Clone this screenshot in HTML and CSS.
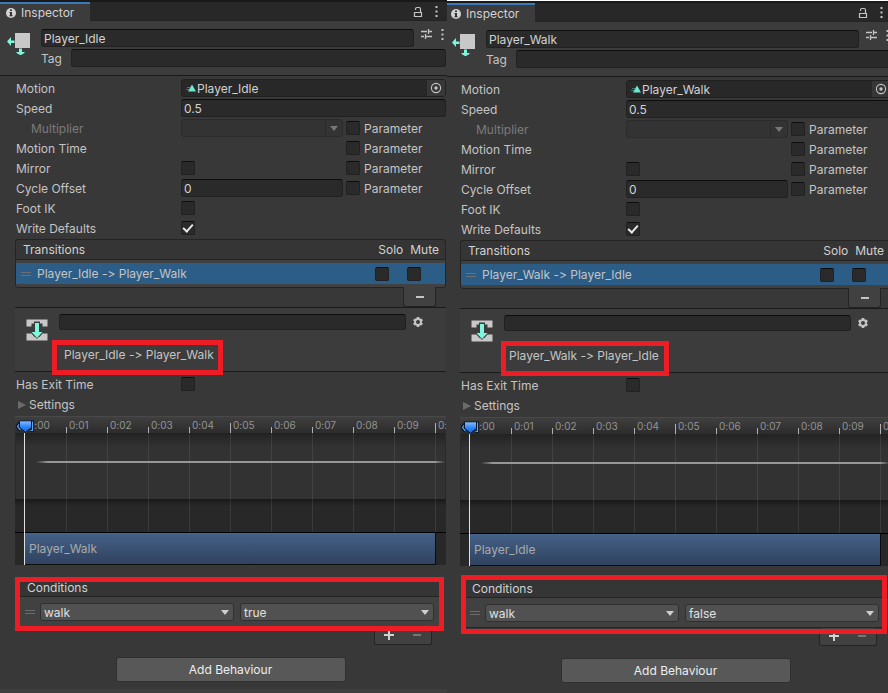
FILE: index.html
```html
<!DOCTYPE html>
<html lang="en">
<head>
<meta charset="utf-8">
<title>Inspector</title>
<link rel="stylesheet" href="styles.css">
</head>
<body>
<svg class="defs" aria-hidden="true">
  <defs>
    <linearGradient id="blue" x1="0" y1="0" x2="0" y2="1"><stop offset="0" stop-color="#8fc0ff"/><stop offset=".5" stop-color="#2f86f5"/><stop offset="1" stop-color="#1465d8"/></linearGradient>
    <symbol id="i-info" viewBox="0 0 10 10"><circle cx="5" cy="5" r="5" fill="#d2d2d2"/><path d="M4 1.5h2v1.6H4zM3.5 4H6v3.2h.7v1H3.4v-1H4V5h-.5z" fill="#333"/></symbol>
    <symbol id="i-lock" viewBox="0 0 10 12"><path d="M1.500 6.500h7v4h-7zM2.500 4V3Q2.500 1.500 4 1.500h2Q7.500 1.500 7.500 3v3.500" fill="none" stroke="#c4c4c4" stroke-width="1.200"/></symbol>
    <symbol id="i-more" viewBox="0 0 3 11"><path d="M.5 0h2v2h-2zM.5 4.500h2v2h-2zM.5 9h2v2h-2z" fill="#c4c4c4"/></symbol>
    <symbol id="i-sliders" viewBox="0 0 11 10"><path d="M0 2.500h6M8 2.500h3M7.500 0v5M0 7.500h3M5 7.500h6M4.500 5v5" fill="none" stroke="#c4c4c4" stroke-width="1.300"/></symbol>
    <symbol id="i-state" viewBox="0 0 24 24"><path d="M8 1h15v15H8z" fill="#c8c8c8"/><path d="M0 9.500 4 5v3.500h3.500v2.500H4V14zM12 16.500h3V20h2.500v1L14 23h-1l-3.500-2v-1H12z" fill="#7ff5dc"/></symbol>
    <symbol id="i-clip" viewBox="0 0 10 8"><path d="M1 3.500h3M0 5.500h3" stroke="#3a7a70"/><path d="M6 .5 10 7.500H2z" fill="#6ee8d0"/></symbol>
    <symbol id="i-pick" viewBox="0 0 12 12"><circle cx="6" cy="6" r="4.600" fill="none" stroke="#c4c4c4" stroke-width="1.100"/><circle cx="6" cy="6" r="1.700" fill="#c4c4c4"/></symbol>
    <symbol id="i-trans" viewBox="0 0 22 22"><path d="M.5.5h21v7h-5v-3h-11v3h-5zM.5 14.500h5l3 3.500h5l3-3.500h5v7H.5z" fill="#c8c8c8"/><path d="M8 2.500h6v9h4L11 20 4 12.500 8 11.500z" fill="#3c3c3c"/><path d="M9 4h4v9h3.500L11 19 5.500 13H9z" fill="#7ff5dc"/></symbol>
    <symbol id="i-gear" viewBox="0 0 12 12"><path d="M6 1v10M1.700 3.500l8.600 5M1.700 8.500l8.600-5" stroke="#c4c4c4" stroke-width="2.600"/><circle cx="6" cy="6" r="4" fill="#c4c4c4"/><circle cx="6" cy="6" r="2" fill="#3c3c3c"/></symbol>
    <symbol id="i-head" viewBox="0 0 18 13"><path d="M4.500 2 1 6.500l3.500 4M14.500 2h2v8.500h-2" fill="none" stroke="#0b1626" stroke-width="3"/><path d="M4.500 2.500 1.500 6.500l3 3.500M14.500 2h2v8.500h-2" fill="none" stroke="#5fa4f5" stroke-width="1.200"/><path d="M3.500.8h12v6.500L9.500 12.400 3.500 7.300z" fill="url(#blue)" stroke="#0b1626"/></symbol>
  </defs>
</svg>

<section class="pane first">
  <div class="tabs">
    <h1 class="tab"><svg width="10" height="10"><use href="#i-info"/></svg>Inspector</h1>
    <button class="icon" aria-label="Lock"><svg width="10" height="12"><use href="#i-lock"/></svg></button>
    <button class="icon" aria-label="Menu"><svg width="3" height="11"><use href="#i-more"/></svg></button>
  </div>
  <header class="head">
    <svg class="state" width="24" height="24"><use href="#i-state"/></svg>
    <div class="names">
      <div class="name"><input class="field" aria-label="Name" value="Player_Idle"><button class="icon" aria-label="Presets"><svg width="11" height="10"><use href="#i-sliders"/></svg></button><button class="icon" aria-label="More"><svg width="3" height="11"><use href="#i-more"/></svg></button></div>
      <div class="tag"><label for="tag1">Tag</label><input class="field" id="tag1"></div>
    </div>
  </header>
  <div class="props">
    <div class="row"><label for="mo1">Motion</label><div class="object wide"><svg width="10" height="8"><use href="#i-clip"/></svg><input id="mo1" value="Player_Idle"><button class="pick" aria-label="Select motion"><svg width="12" height="12"><use href="#i-pick"/></svg></button></div></div>
    <div class="row"><label for="sp1">Speed</label><input class="field wide" id="sp1" value="0.5"></div>
    <div class="row"><label class="sub" for="mu1">Multiplier</label><div class="drop off"><select id="mu1" disabled><option></option></select></div><label class="param"><input type="checkbox">Parameter</label></div>
    <div class="row"><span>Motion Time</span><span></span><label class="param"><input type="checkbox">Parameter</label></div>
    <div class="row"><label for="mi1">Mirror</label><input type="checkbox" id="mi1"><label class="param"><input type="checkbox">Parameter</label></div>
    <div class="row"><label for="cy1">Cycle Offset</label><input class="field" id="cy1" value="0"><label class="param"><input type="checkbox">Parameter</label></div>
    <div class="row"><label for="fo1">Foot IK</label><input type="checkbox" id="fo1"></div>
    <div class="row"><label for="wr1">Write Defaults</label><input type="checkbox" id="wr1" checked></div>
  </div>
  <div class="list">
    <div class="listhead"><span>Transitions</span><span>Solo</span><span>Mute</span></div>
    <div class="listbody"><div class="item"><i class="grip"></i><span>Player_Idle -&gt; Player_Walk</span><input type="checkbox" aria-label="Solo"><input type="checkbox" aria-label="Mute"></div></div>
    <div class="listfoot"><button class="minus" aria-label="Remove transition"></button></div>
  </div>
  <div class="trans">
    <svg class="transicon" width="22" height="22"><use href="#i-trans"/></svg>
    <div class="transmain">
      <div class="transname"><input class="field" aria-label="Transition name"><button class="icon" aria-label="Settings"><svg width="12" height="12"><use href="#i-gear"/></svg></button></div>
      <p class="marked">Player_Idle -&gt; Player_Walk</p>
    </div>
  </div>
  <div class="props exit">
    <div class="row"><label for="ex1">Has Exit Time</label><input type="checkbox" id="ex1"></div>
    <button class="fold">Settings</button>
  </div>
  <div class="timeline">
    <div class="ruler"><span>0:00</span><span>0:01</span><span>0:02</span><span>0:03</span><span>0:04</span><span class="major">0:05</span><span>0:06</span><span>0:07</span><span>0:08</span><span>0:09</span><span class="major">0:10</span></div>
    <div class="track curve"></div>
    <div class="track low"></div>
    <div class="cliprow"><div class="clip">Player_Walk</div></div>
    <div class="playhead"><svg width="18" height="13"><use href="#i-head"/></svg></div>
  </div>
  <div class="conds">
    <h2>Conditions</h2>
    <div class="cond"><i class="grip"></i><div class="drop"><select aria-label="Parameter"><option>walk</option></select></div><div class="drop"><select aria-label="Value"><option>true</option></select></div></div>
    <div class="condfoot"><button class="plus" aria-label="Add condition"></button><button class="minus dim" aria-label="Remove condition"></button></div>
  </div>
  <div class="addrow"><button class="add">Add Behaviour</button></div>
  <div class="end"></div>
</section>

<section class="pane second">
  <div class="tabs">
    <h1 class="tab"><svg width="10" height="10"><use href="#i-info"/></svg>Inspector</h1>
    <button class="icon" aria-label="Lock"><svg width="10" height="12"><use href="#i-lock"/></svg></button>
    <button class="icon" aria-label="Menu"><svg width="3" height="11"><use href="#i-more"/></svg></button>
  </div>
  <header class="head">
    <svg class="state" width="24" height="24"><use href="#i-state"/></svg>
    <div class="names">
      <div class="name"><input class="field" aria-label="Name" value="Player_Walk"><button class="icon" aria-label="Presets"><svg width="11" height="10"><use href="#i-sliders"/></svg></button><button class="icon" aria-label="More"><svg width="3" height="11"><use href="#i-more"/></svg></button></div>
      <div class="tag"><label for="tag2">Tag</label><input class="field" id="tag2"></div>
    </div>
  </header>
  <div class="props">
    <div class="row"><label for="mo2">Motion</label><div class="object wide"><svg width="10" height="8"><use href="#i-clip"/></svg><input id="mo2" value="Player_Walk"><button class="pick" aria-label="Select motion"><svg width="12" height="12"><use href="#i-pick"/></svg></button></div></div>
    <div class="row"><label for="sp2">Speed</label><input class="field wide" id="sp2" value="0.5"></div>
    <div class="row"><label class="sub" for="mu2">Multiplier</label><div class="drop off"><select id="mu2" disabled><option></option></select></div><label class="param"><input type="checkbox">Parameter</label></div>
    <div class="row"><span>Motion Time</span><span></span><label class="param"><input type="checkbox">Parameter</label></div>
    <div class="row"><label for="mi2">Mirror</label><input type="checkbox" id="mi2"><label class="param"><input type="checkbox">Parameter</label></div>
    <div class="row"><label for="cy2">Cycle Offset</label><input class="field" id="cy2" value="0"><label class="param"><input type="checkbox">Parameter</label></div>
    <div class="row"><label for="fo2">Foot IK</label><input type="checkbox" id="fo2"></div>
    <div class="row"><label for="wr2">Write Defaults</label><input type="checkbox" id="wr2" checked></div>
  </div>
  <div class="list">
    <div class="listhead"><span>Transitions</span><span>Solo</span><span>Mute</span></div>
    <div class="listbody"><div class="item"><i class="grip"></i><span>Player_Walk -&gt; Player_Idle</span><input type="checkbox" aria-label="Solo"><input type="checkbox" aria-label="Mute"></div></div>
    <div class="listfoot"><button class="minus" aria-label="Remove transition"></button></div>
  </div>
  <div class="trans">
    <svg class="transicon" width="22" height="22"><use href="#i-trans"/></svg>
    <div class="transmain">
      <div class="transname"><input class="field" aria-label="Transition name"><button class="icon" aria-label="Settings"><svg width="12" height="12"><use href="#i-gear"/></svg></button></div>
      <p class="marked">Player_Walk -&gt; Player_Idle</p>
    </div>
  </div>
  <div class="props exit">
    <div class="row"><label for="ex2">Has Exit Time</label><input type="checkbox" id="ex2"></div>
    <button class="fold">Settings</button>
  </div>
  <div class="timeline">
    <div class="ruler"><span>0:00</span><span>0:01</span><span>0:02</span><span>0:03</span><span>0:04</span><span class="major">0:05</span><span>0:06</span><span>0:07</span><span>0:08</span><span>0:09</span><span class="major">0:10</span></div>
    <div class="track curve"></div>
    <div class="track low"></div>
    <div class="cliprow"><div class="clip">Player_Idle</div></div>
    <div class="playhead"><svg width="18" height="13"><use href="#i-head"/></svg></div>
  </div>
  <div class="conds">
    <h2>Conditions</h2>
    <div class="cond"><i class="grip"></i><div class="drop"><select aria-label="Parameter"><option>walk</option></select></div><div class="drop"><select aria-label="Value"><option>false</option></select></div></div>
    <div class="condfoot"><button class="plus" aria-label="Add condition"></button><button class="minus dim" aria-label="Remove condition"></button></div>
  </div>
  <div class="addrow"><button class="add">Add Behaviour</button></div>
</section>
</body>
</html>
```
FILE: styles.css
```css
* { box-sizing: border-box; }
body {
  margin: 0;
  display: flex;
  min-height: 100vh;
  overflow: hidden;
  background: #383838;
  color: #c4c4c4;
  font: 12px/18px Inter, sans-serif;
  font-variant-ligatures: none;
}
button, input, select { font: inherit; font-variant-ligatures: none; color: inherit; margin: 0; padding: 0; border: 0; background: none; min-width: 0; }
svg { display: block; flex: none; }
h1, h2, p { margin: 0; font: inherit; font-variant-ligatures: none; }
.defs { position: absolute; width: 0; height: 0; }

/* The first inspector overlaps the edge of the second by two pixels. */
.pane { flex: 0 0 calc(50% + 3px); min-width: 0; display: flex; flex-direction: column; background: #383838; }
.first { z-index: 1; }
.second { margin-left: -2px; border-top: 1px solid #fff; }

.tabs { display: flex; align-items: center; gap: 12px; height: 21px; padding-right: 9px; border-top: 2px solid #191919; background: #282828; box-shadow: inset 0 -1px #232323; }
.tab { display: flex; align-items: center; gap: 5px; height: 19px; width: 90px; padding-left: 6px; margin-right: auto; border-top: 2px solid #3a79bb; background: #3c3c3c; color: #d2d2d2; }
.icon { display: flex; flex: none; align-items: center; }

.head { display: flex; height: 55px; padding: 8px 1px 0 7px; background: #3c3c3c; border-bottom: 1px solid #1a1a1a; }
.state { margin: 3px 10px 0 0; }
.names { flex: 1; display: grid; gap: 2px; align-content: start; }
.name { display: flex; }
.name .field { flex: 1; }
.name .icon { height: 10px; margin-left: 7px; }
.name .icon + .icon { margin: 0 2px 0 9px; }
.tag { display: flex; }
.tag label { width: 30px; margin-top: 1px; }
.tag .field { flex: 1; }

.field, .object { height: 18px; padding: 1px 2px 0; border: 1px solid #212121; border-top-color: #0d0d0d; border-radius: 3px; background: #2a2a2a; color: #d2d2d2; }
.object { display: flex; align-items: center; padding: 0 0 0 4px; border-color: #202020; background: #282828; }
.object input { flex: 1; height: 16px; padding: 1px 0 0 1px; }
.pick { display: grid; place-items: center; width: 18px; height: 16px; background: #373737; }
.props { display: grid; gap: 2px; padding: 3px 1px 0 16px; }
.row { display: grid; grid-template: 18px / 165px 1fr 100px; align-items: center; }
.row > label, .row > span { padding-top: 2px; }
.row .field, .row .drop { margin-right: 3px; }
.row .wide { grid-column: 2 / 4; margin-right: 0; }
.row .sub { padding-left: 15px; color: #7b7b7b; }
.param { display: flex; align-items: center; gap: 4px; }
.param input { margin-bottom: 2px; }

input[type="checkbox"] { appearance: none; flex: none; display: grid; place-items: center; width: 14px; height: 14px; border: 1px solid #212121; border-top-color: #0d0d0d; border-radius: 2px; background: #2a2a2a; }
input[type="checkbox"]:checked::before { content: ""; width: 8px; height: 4px; margin-bottom: 2px; border: solid #e8e8e8; border-width: 0 0 2px 2px; rotate: -48deg; }

.drop { position: relative; flex: 1; height: 18px; border: 1px solid #303030; border-radius: 3px; background: #515151; color: #e0e0e0; }
.drop select { appearance: none; display: block; width: 100%; height: 16px; padding-left: 3px; }
.drop::after { content: ""; position: absolute; right: 4px; top: 6px; border: 4px solid transparent; border-top: 5px solid #cfcfcf; border-bottom: 0; pointer-events: none; }
.off { border-color: #2b2b2b; background: linear-gradient(#2b2b2b, #2b2b2b) right 16px top / 1px 100% no-repeat #333; }
.off::after { border-top-color: #777; }

.list { padding: 0 1px 0 15px; margin-top: 2px; }
.listhead { display: flex; height: 20px; padding: 1px 6px 0 7px; border: 1px solid #242424; border-bottom: 0; border-radius: 3px 3px 0 0; background: #353535; color: #d2d2d2; gap: 7px; }
.listhead span:first-child { flex: 1; }
.listbody { height: 29px; padding: 3px 0 4px; border: 1px solid #242424; border-radius: 0 0 3px 3px; background: #414141; }
.item { display: flex; align-items: center; height: 21px; padding: 0 24px 0 5px; background: #2c5d87; }
.item .grip { margin-right: 6px; border-color: #6f6f6f; }
.item span { flex: 1; }
.item input + input { margin-left: 18px; }
.grip { width: 10px; height: 4px; border: solid #6b6b6b; border-width: 1px 0; }
.listfoot { display: flex; justify-content: flex-end; height: 19px; padding-right: 10px; }
.listfoot .minus { width: 33px; height: 20px; margin-top: -1px; border: 1px solid #242424; border-top: 0; border-radius: 0 0 3px 3px; background: #414141; }
.minus, .plus { display: grid; place-items: center; }
.minus::before { content: ""; width: 8px; height: 2px; background: #c4c4c4; }
.plus::before { content: ""; width: 10px; height: 10px; background: linear-gradient(#d2d2d2, #d2d2d2) center / 10px 2px no-repeat, linear-gradient(#d2d2d2, #d2d2d2) center / 2px 10px no-repeat; }
.dim::before { background: #777; }

.trans { display: flex; height: 65px; margin: 0 1px 0 15px; padding-left: 11px; border: solid #1a1a1a; border-width: 1px 0; background: #3c3c3c; }
.transicon { margin: 11px 4px 0 0; }
.transmain { flex: 1; }
.transname { display: flex; gap: 6px; padding: 6px 22px 0 7px; }
.transname .field { flex: 1; height: 16px; }
.marked { width: fit-content; height: 35px; margin-top: 10px; padding: 0 4px 0 7px; border: 5px solid #ee1c24; line-height: 20px; }
.second .marked { margin-left: 4px; padding: 0 5px 0 3px; }

.exit { padding-top: 3px; }
.fold { display: flex; align-items: center; gap: 3px; height: 18px; padding: 2px 0 0 2px; }
.fold::before { content: ""; border: 4px solid transparent; border-left: 8px solid #6b6b6b; border-right: 0; }

.timeline { position: relative; margin: 3px 1px 0 15px; overflow: hidden; }
.ruler { display: flex; height: 17px; padding-left: 10px; border-top: 1px solid #484848; background: linear-gradient(#3f3f3f, #2c2c2c); font-size: 10px; line-height: 17px; color: #949494; }
.ruler span { flex: 0 0 41px; padding-left: 3px; background: linear-gradient(#b0b0b0, #b0b0b0) left bottom / 1px 6px no-repeat; }
.ruler .major { background-size: 1px 10px; }
.track { position: relative; overflow: hidden; }
.track::before { content: ""; position: absolute; inset: 0 0 0 51px; background: repeating-linear-gradient(90deg, #ffffff15 0 1px, transparent 1px 41px); }
.curve { height: 66px; border: 1px solid #292929; border-width: 0 1px; background: linear-gradient(#222, #323232 14px); }
.curve::before { left: 50px; }
.curve::after { content: ""; position: absolute; left: 20px; right: 0; top: 28px; height: 2px; background: linear-gradient(90deg, transparent, #979797 12px calc(100% - 10px), transparent); }
.low { height: 33px; background: linear-gradient(#191919, #282828 7px); }
.cliprow { padding: 0 10px; border-top: 1px solid #000; background: #282828; }
.clip { height: 32px; padding-left: 4px; border: solid #0c0c0c; border-width: 0 1px 1px 0; background: linear-gradient(#46658f, #425d83 3px, #30435f); color: #aaa; line-height: 32px; }
.playhead { position: absolute; left: 9px; top: 4px; bottom: 0; width: 1px; background: linear-gradient(transparent 13px, #e0e0e0 13px); }
.playhead svg { margin-left: -8px; }

.conds { position: relative; padding: 0 4px 0 20px; margin-top: 14px; height: 66px; }
.conds h2 { height: 18px; padding-left: 7px; border-bottom: 1px solid #242424; background: #353535; color: #d2d2d2; }
.cond { display: flex; align-items: center; gap: 6px; height: 30px; padding: 0 9px 0 5px; border-bottom: 1px solid #242424; background: #414141; }
.cond .grip { margin-right: -1px; }
.condfoot { display: flex; width: 58px; height: 18px; margin: 0 11px 0 auto; border: 1px solid #242424; border-top: 0; border-radius: 0 0 3px 3px; background: #414141; }
.condfoot button { flex: 1; padding-bottom: 2px; }
.conds::after { content: ""; position: absolute; inset: -2px 3px 14px 15px; border: 5px solid #ee1c24; pointer-events: none; }
.second .conds::after { inset: -5px 5px 12px 16px; }
.addrow { display: flex; justify-content: center; padding: 12px 1px 0 15px; }
.add { width: 230px; height: 25px; border: 1px solid #303030; border-radius: 3px; background: #585858; color: #eee; }
.end { flex: 1; margin-top: 7px; background: #3f3f3f; }
```
